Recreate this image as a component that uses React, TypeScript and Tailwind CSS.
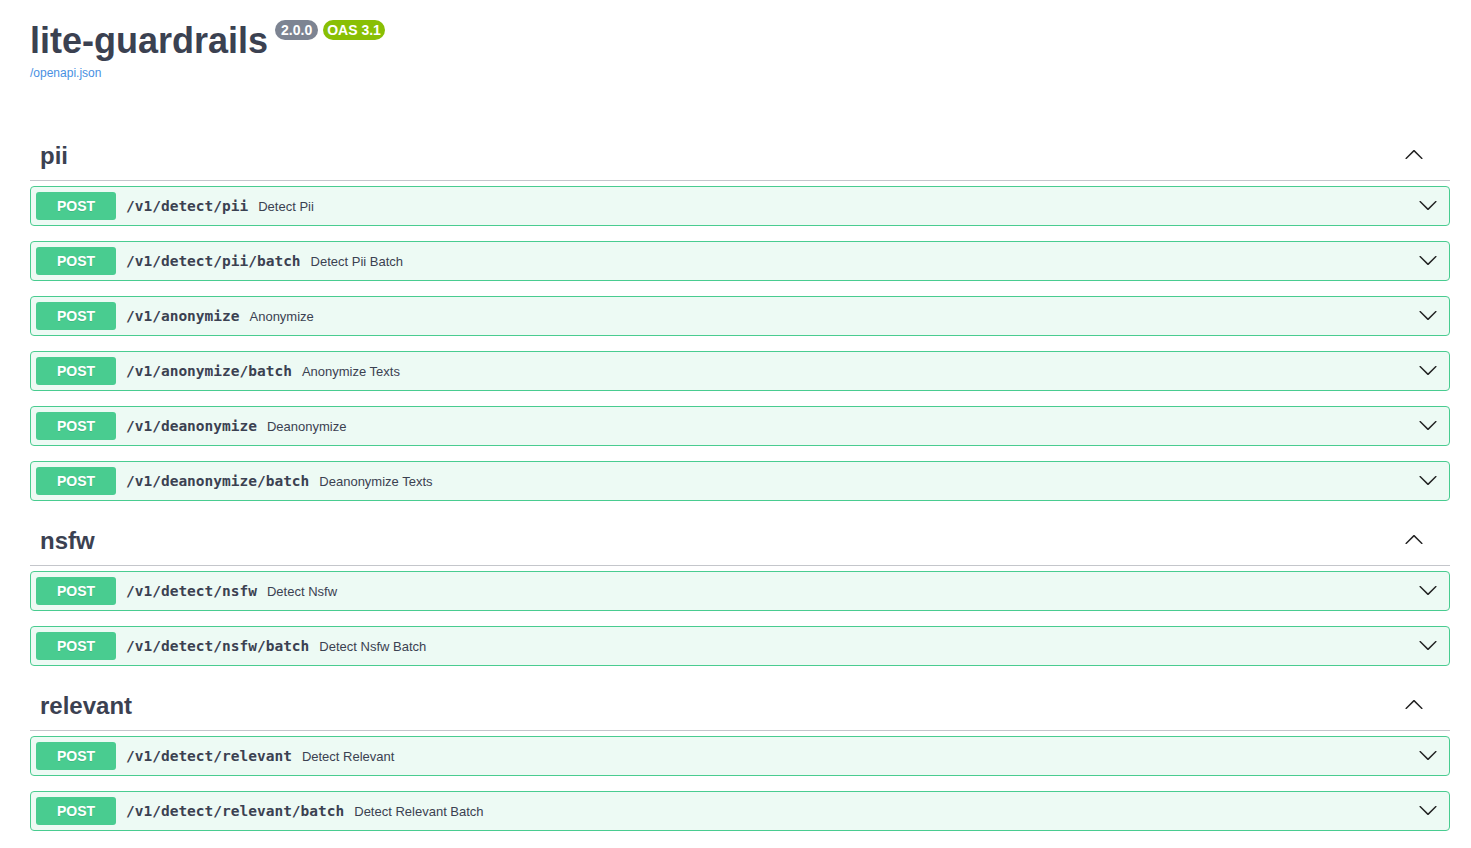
import React from "react";

type Op = { path: string; summary: string };
type Section = { name: string; ops: Op[] };

const sections: Section[] = [
  {
    name: "pii",
    ops: [
      { path: "/v1/detect/pii", summary: "Detect Pii" },
      { path: "/v1/detect/pii/batch", summary: "Detect Pii Batch" },
      { path: "/v1/anonymize", summary: "Anonymize" },
      { path: "/v1/anonymize/batch", summary: "Anonymize Texts" },
      { path: "/v1/deanonymize", summary: "Deanonymize" },
      { path: "/v1/deanonymize/batch", summary: "Deanonymize Texts" },
    ],
  },
  {
    name: "nsfw",
    ops: [
      { path: "/v1/detect/nsfw", summary: "Detect Nsfw" },
      { path: "/v1/detect/nsfw/batch", summary: "Detect Nsfw Batch" },
    ],
  },
  {
    name: "relevant",
    ops: [
      { path: "/v1/detect/relevant", summary: "Detect Relevant" },
      { path: "/v1/detect/relevant/batch", summary: "Detect Relevant Batch" },
    ],
  },
];

const ArrowDown = ({ className }: { className?: string }) => (
  <svg viewBox="0 0 20 20" width="20" height="20" className={className} fill="currentColor">
    <path d="M17.418 6.109c.272-.268.709-.268.979 0s.271.701 0 .969l-7.908 7.83c-.27.268-.707.268-.979 0l-7.908-7.83c-.27-.268-.27-.701 0-.969.271-.268.709-.268.979 0L10 13.25l7.418-7.141z" />
  </svg>
);

const ArrowUp = ({ className }: { className?: string }) => (
  <svg viewBox="0 0 20 20" width="20" height="20" className={className} fill="currentColor">
    <path d="M17.418 14.908c.272.268.709.268.979 0s.271-.701 0-.969l-7.908-7.83c-.27-.268-.707-.268-.979 0l-7.908 7.83c-.27.268-.27.701 0 .969.271.268.709.268.979 0L10 7.767l7.418 7.141z" />
  </svg>
);

function OpRow({ op }: { op: Op }) {
  return (
    <div className="mb-[15px] flex h-[40px] items-center rounded-[4px] border border-[#49cc90] bg-[#edfaf4] p-[5px]">
      <span className="flex h-[28px] w-[80px] items-center justify-center rounded-[3px] bg-[#49cc90] text-[14px] font-bold text-white [text-shadow:0_1px_0_rgba(0,0,0,0.1)]">
        POST
      </span>
      <span className="pl-[10px] pr-[10px] pt-[2px] font-['DejaVu_Sans_Mono',monospace] text-[14.5px] font-bold text-[#3b4151]">
        {op.path}
      </span>
      <span className="flex-1 pt-[1px] text-[13px] text-[#3b4151]">{op.summary}</span>
      <ArrowDown className="mb-[3px] mr-[6px] text-[#222]" />
    </div>
  );
}

export default function App() {
  return (
    <div className="min-h-screen bg-white font-['Liberation_Sans',Arial,sans-serif] text-[#3b4151]">
      <div className="ml-[30px] w-[1420px]">
        <div className="pt-[20px]">
          <div className="flex items-start">
            <h2 className="text-[36px] font-bold leading-[41px] text-[#3b4151]">lite-guardrails</h2>
            <div className="ml-[7px] flex gap-[5px]">
              <span className="rounded-full bg-[#7d8492] px-[6px] text-[14px] font-bold leading-[20px] text-white">
                2.0.0
              </span>
              <span className="rounded-full bg-[#89bf04] px-[4px] text-[14px] font-bold leading-[20px] text-white">
                OAS 3.1
              </span>
            </div>
          </div>
          <a className="mt-[5px] block text-[12px] leading-[14px] text-[#4990e2]">/openapi.json</a>
        </div>
        <div className="mt-[51px]">
          {sections.map((s) => (
            <div key={s.name}>
              <div className="mb-[5px] flex h-[50px] items-center border-b border-[#c4c6cb] pl-[10px] pr-[26px]">
                <span className="flex-1 text-[24px] font-bold leading-[28px]">{s.name}</span>
                <ArrowUp className="mb-[3px] text-[#222]" />
              </div>
              {s.ops.map((op) => (
                <OpRow key={op.path} op={op} />
              ))}
            </div>
          ))}
        </div>
      </div>
    </div>
  );
}
